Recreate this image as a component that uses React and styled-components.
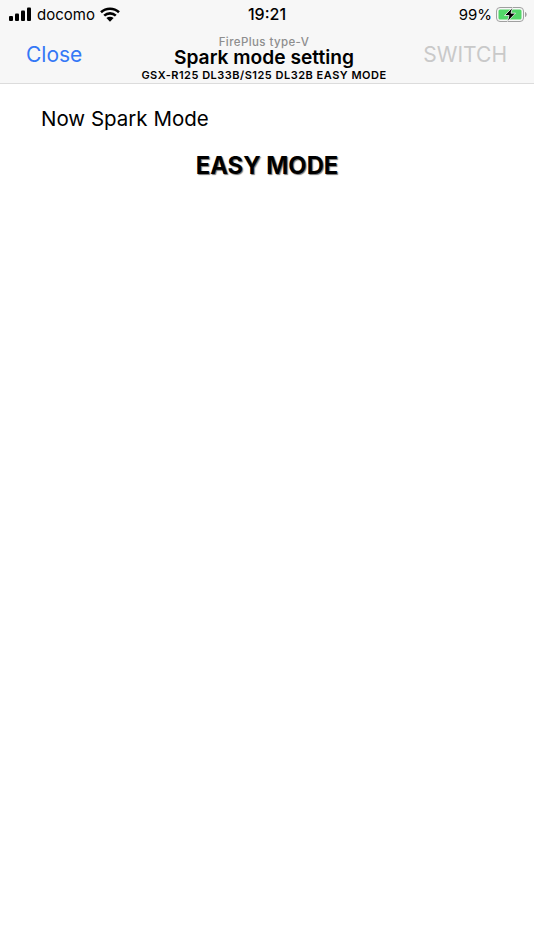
import React from 'react';
import styled, { createGlobalStyle } from 'styled-components';

const GlobalStyle = createGlobalStyle`
  html, body {
    margin: 0;
    padding: 0;
    background: #fff;
    font-family: "Inter", "Liberation Sans", sans-serif;
  }
`;

const Page = styled.div`
  width: 534px;
  height: 950px;
  overflow: hidden;
  background: #fff;
  color: #000;
`;

const Header = styled.header`
  height: 84px;
  box-sizing: border-box;
  background: #f7f7f7;
  border-bottom: 1px solid #dcdcdc;
`;

const StatusBar = styled.div`
  height: 28px;
  padding: 0 7px 0 9px;
  display: grid;
  grid-template-columns: 1fr auto 1fr;
  align-items: center;
  font-size: 15px;
`;

const StatusLeft = styled.div`
  display: flex;
  align-items: center;
  gap: 5px;
`;

const StatusRight = styled.div`
  display: flex;
  align-items: center;
  justify-content: flex-end;
  gap: 4px;
`;

const Clock = styled.div`
  padding-right: 2px;
  font-size: 16px;
  font-weight: 500;
`;

const NavBar = styled.div`
  height: 55px;
  display: grid;
  grid-template-columns: 1fr auto 1fr;
  align-items: start;
`;

const NavButton = styled.div`
  font-size: 21px;
  line-height: 26px;
  margin-top: 14px;
  color: ${({ $disabled }) => ($disabled ? '#c9c9c9' : '#3478f6')};
  padding: ${({ $disabled }) => ($disabled ? '0 27px 0 0' : '0 0 0 26px')};
  text-align: ${({ $disabled }) => ($disabled ? 'right' : 'left')};
`;

const TitleBlock = styled.div`
  display: flex;
  flex-direction: column;
  align-items: center;
  padding: 8px 6px 0 0;
`;

const Prompt = styled.div`
  font-size: 11.5px;
  line-height: 12px;
  font-weight: 500;
  letter-spacing: 0.4px;
  color: #8e8e8e;
`;

const Title = styled.div`
  font-size: 19.2px;
  line-height: 18px;
  font-weight: 600;
`;

const Subtitle = styled.div`
  margin-top: 2px;
  font-size: 11px;
  line-height: 14px;
  font-weight: 600;
  letter-spacing: 0.5px;
  white-space: nowrap;
`;

const Content = styled.main`
  padding: 22px 0 0 41px;
`;

const Label = styled.div`
  font-size: 20.5px;
  line-height: 26px;
`;

const Mode = styled.div`
  margin: 20px 0 0 -41px;
  text-align: center;
  font-size: 23.8px;
  line-height: 28px;
  font-weight: 700;
  text-shadow: 1px 1px 1px rgba(0, 0, 0, 0.55);
`;

const SignalIcon = () => (
  <svg width="23" height="14" viewBox="0 0 23 14" fill="#000">
    <rect x="0" y="9" width="4" height="5" rx="1" />
    <rect x="6" y="6.5" width="4" height="7.5" rx="1" />
    <rect x="12" y="3.5" width="4" height="10.5" rx="1" />
    <rect x="18" y="0.5" width="4" height="13.5" rx="1" />
  </svg>
);

const WifiIcon = () => (
  <svg width="20" height="15" viewBox="0 0 20 15" fill="none" stroke="#000" strokeWidth="2.6">
    <path d="M1 5.2C6 .6 14 .6 19 5.2" />
    <path d="M4.2 8.6c3.3-3 8.3-3 11.6 0" />
    <path d="M10 14.800l-3.600-3.900c2-1.700 5.200-1.700 7.200 0z" fill="#000" stroke="none" />
  </svg>
);

const BatteryIcon = () => (
  <svg width="31" height="15" viewBox="0 0 31 15">
    <rect x="0.5" y="0.5" width="27" height="14" rx="3.5" fill="none" stroke="#a0a0a0" />
    <rect x="2.500" y="2.500" width="23" height="10" rx="1.500" fill="#53d769" />
    <path d="M29 5v5c1-.3 1.700-1.300 1.700-2.500S30 5.300 29 5z" fill="#a0a0a0" />
    <path d="M16.500 0.500 8.500 8.500h4.500l-1.500 6 8-8.300h-4.500z" fill="#000" stroke="#f7f7f7" strokeWidth="0.8" />
  </svg>
);

const App = () => (
  <Page>
    <GlobalStyle />
    <Header>
      <StatusBar>
        <StatusLeft>
          <SignalIcon />
          <span>docomo</span>
          <WifiIcon />
        </StatusLeft>
        <Clock>19:21</Clock>
        <StatusRight>
          <span>99%</span>
          <BatteryIcon />
        </StatusRight>
      </StatusBar>
      <NavBar>
        <NavButton>Close</NavButton>
        <TitleBlock>
          <Prompt>FirePlus type-V</Prompt>
          <Title>Spark mode setting</Title>
          <Subtitle>GSX-R125 DL33B/S125 DL32B EASY MODE</Subtitle>
        </TitleBlock>
        <NavButton $disabled>SWITCH</NavButton>
      </NavBar>
    </Header>
    <Content>
      <Label>Now Spark Mode</Label>
      <Mode>EASY MODE</Mode>
    </Content>
  </Page>
);

export default App;
